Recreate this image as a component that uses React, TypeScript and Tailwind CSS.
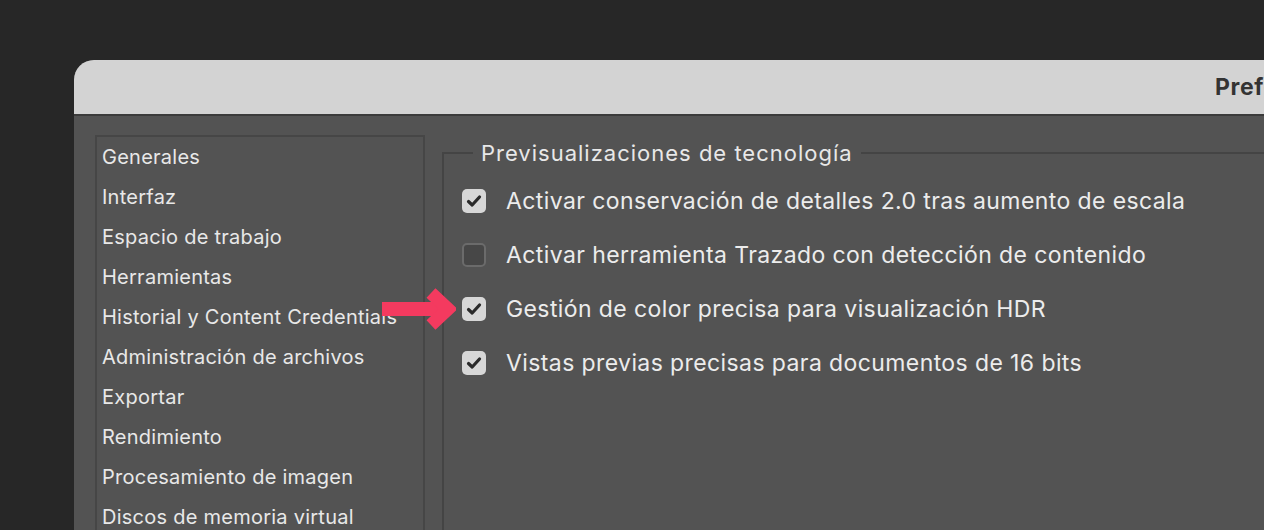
const sidebarItems = [
  "Generales",
  "Interfaz",
  "Espacio de trabajo",
  "Herramientas",
  "Historial y Content Credentials",
  "Administración de archivos",
  "Exportar",
  "Rendimiento",
  "Procesamiento de imagen",
  "Discos de memoria virtual",
];

const options = [
  { label: "Activar conservación de detalles 2.0 tras aumento de escala", checked: true },
  { label: "Activar herramienta Trazado con detección de contenido", checked: false },
  { label: "Gestión de color precisa para visualización HDR", checked: true },
  { label: "Vistas previas precisas para documentos de 16 bits", checked: true },
];

function Checkbox({ checked }: { checked: boolean }) {
  if (!checked) {
    return <div className="w-6 h-6 rounded-[5px] border-2 border-[#6b6b6b] bg-[#474747] shrink-0" />;
  }
  return (
    <div className="w-6 h-6 rounded-[5px] bg-[#d7d7d7] flex items-center justify-center shrink-0">
      <svg width="16" height="16" viewBox="0 0 16 16">
        <path d="M2.5 8.5 L6.2 12 L13.5 4" fill="none" stroke="#2a2a2a" strokeWidth="3.2" strokeLinecap="round" strokeLinejoin="round" />
      </svg>
    </div>
  );
}

function Arrow() {
  return (
    <svg width="76" height="44" viewBox="0 0 76 44" className="absolute left-[380px] top-[288px]">
      <path d="M2 21 L64 21" stroke="#f43a5f" strokeWidth="14" />
      <path d="M51 5 L68 21 L51 37" fill="none" stroke="#f43a5f" strokeWidth="13" strokeLinejoin="miter" />
    </svg>
  );
}

export default function App() {
  return (
    <div
      className="relative w-[1264px] h-[530px] overflow-hidden bg-[#272727] pt-[60px] pl-[74px]"
      style={{ fontFamily: "Inter, 'Noto Sans', sans-serif" }}
    >
      <div className="w-[1400px] h-[600px] rounded-tl-[20px] overflow-hidden bg-[#535353] flex flex-col">
        {/* Title bar */}
        <div className="h-[56px] bg-[#d3d3d3] border-b-2 border-[#3b3b3b] flex items-center pl-[1141px] shrink-0">
          <span className="text-[23px] font-bold tracking-[0.6px] text-[#333] whitespace-nowrap">Preferencias</span>
        </div>

        {/* Body */}
        <div className="flex pl-[21px] pt-[19px]">
          <div className="w-[330px] h-[500px] border-2 border-[#464646] shrink-0">
            {sidebarItems.map((item) => (
              <div
                key={item}
                className="h-10 flex items-center pl-[5px] text-[20px] tracking-[0.25px] text-[#e8e8e8] whitespace-nowrap"
              >
                {item}
              </div>
            ))}
          </div>

          <fieldset className="ml-[17px] mt-[4px] w-[900px] h-[500px] border-2 border-[#444]">
            <legend className="ml-[29px] px-[8px] text-[22px] tracking-[1px] text-[#e8e8e8] leading-[28px]">
              Previsualizaciones de tecnología
            </legend>
            <div className="flex flex-col pl-[18px] pt-[7px]">
              {options.map((o) => (
                <div key={o.label} className="h-[54px] flex items-center gap-[20px]">
                  <Checkbox checked={o.checked} />
                  <span className="text-[23px] tracking-[0.4px] text-[#ececec] whitespace-nowrap">{o.label}</span>
                </div>
              ))}
            </div>
          </fieldset>
        </div>
      </div>

      <Arrow />
    </div>
  );
}
